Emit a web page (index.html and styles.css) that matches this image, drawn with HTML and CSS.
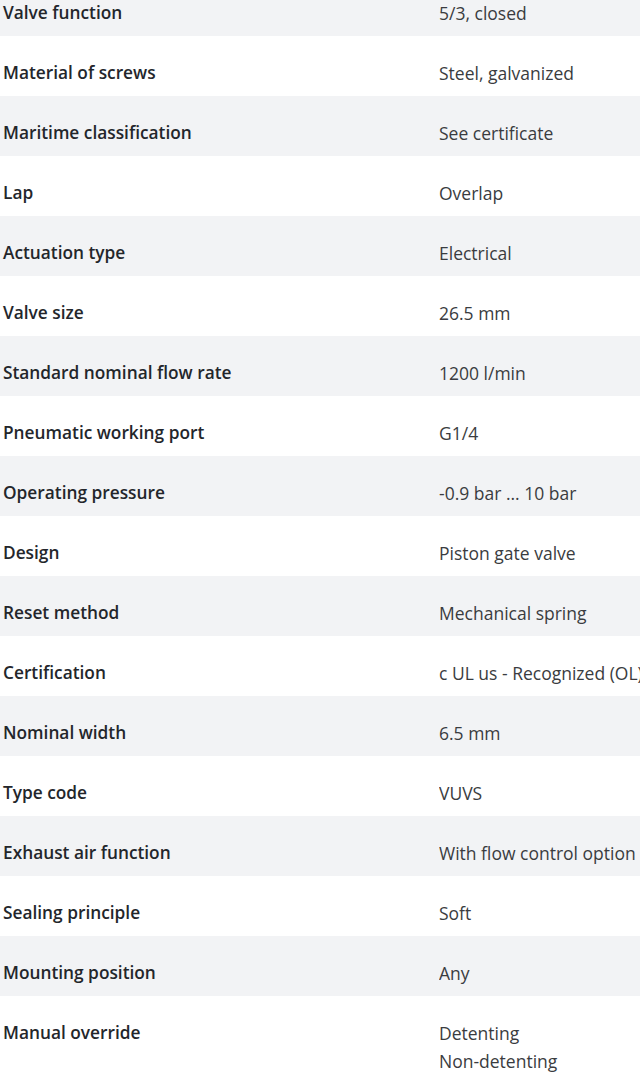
FILE: index.html
```html
<!DOCTYPE html>
<html lang="en">
<head>
<meta charset="utf-8">
<title>Technical data</title>
<link rel="stylesheet" href="styles.css">
</head>
<body>
<div class="specs">
  <div class="row"><div class="label">Valve function</div><div class="value">5/3, closed</div></div>
  <div class="row"><div class="label">Material of screws</div><div class="value">Steel, galvanized</div></div>
  <div class="row"><div class="label">Maritime classification</div><div class="value">See certificate</div></div>
  <div class="row"><div class="label">Lap</div><div class="value">Overlap</div></div>
  <div class="row"><div class="label">Actuation type</div><div class="value">Electrical</div></div>
  <div class="row"><div class="label">Valve size</div><div class="value">26.5 mm</div></div>
  <div class="row"><div class="label">Standard nominal flow rate</div><div class="value">1200 l/min</div></div>
  <div class="row"><div class="label">Pneumatic working port</div><div class="value">G1/4</div></div>
  <div class="row"><div class="label">Operating pressure</div><div class="value">-0.9 bar ... 10 bar</div></div>
  <div class="row"><div class="label">Design</div><div class="value">Piston gate valve</div></div>
  <div class="row"><div class="label">Reset method</div><div class="value">Mechanical spring</div></div>
  <div class="row"><div class="label">Certification</div><div class="value">c UL us - Recognized (OL)</div></div>
  <div class="row"><div class="label">Nominal width</div><div class="value">6.5 mm</div></div>
  <div class="row"><div class="label">Type code</div><div class="value">VUVS</div></div>
  <div class="row"><div class="label">Exhaust air function</div><div class="value">With flow control option</div></div>
  <div class="row"><div class="label">Sealing principle</div><div class="value">Soft</div></div>
  <div class="row"><div class="label">Mounting position</div><div class="value">Any</div></div>
  <div class="row"><div class="label">Manual override</div><div class="value"><div>Detenting</div><div>Non-detenting</div></div></div>
</div>
</body>
</html>
```
FILE: styles.css
```css
html, body {
  margin: 0;
  padding: 0;
  background: #ffffff;
  overflow: hidden;
}
.specs {
  margin-top: -24px;
  width: 640px;
  overflow: hidden;
  font-family: "Open Sans", "Noto Sans", sans-serif;
  font-size: 17.3px;
  color: #333333;
}
.row {
  display: grid;
  grid-template-columns: 436px 1fr;
  min-height: 60px;
  box-sizing: border-box;
  padding: 23px 0 9px 3px;
  line-height: 28px;
  white-space: nowrap;
}
.row:nth-child(odd) {
  background: #f2f3f5;
}
.label {
  font-weight: 600;
  color: #23262b;
}
.value {
  overflow: hidden;
  font-size: 17.5px;
  color: #3a3c40;
}
```
